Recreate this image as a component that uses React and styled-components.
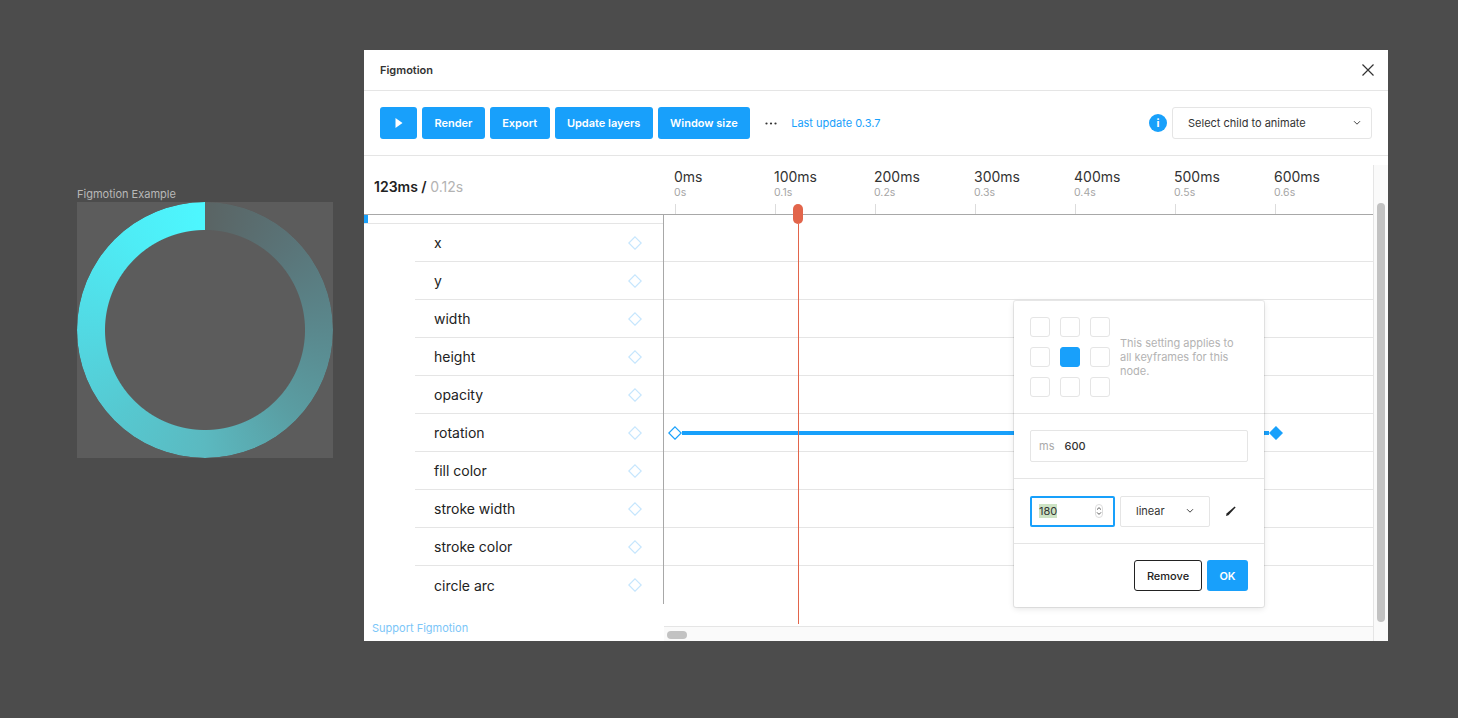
import styled, { createGlobalStyle } from 'styled-components';

const BLUE = '#18a0fb';
const LINE = '#e5e5e5';

const GlobalStyle = createGlobalStyle`
  html, body { margin: 0; padding: 0; height: 100%; background: #4c4c4c; overflow: hidden; }
  body { font-family: Inter, "Liberation Sans", sans-serif; color: #222; }
  * { box-sizing: border-box; }
`;

const PROPS = ['x', 'y', 'width', 'height', 'opacity', 'rotation', 'fill color', 'stroke width', 'stroke color', 'circle arc'];
const TICKS = [0, 100, 200, 300, 400, 500, 600];

function Diamond({ fill = 'none', stroke = BLUE, size = 14 }) {
  return (
    <svg width={size} height={size} viewBox="0 0 14 14" style={{ flex: 'none', display: 'block' }}>
      <path d="M7 0.8 L13.2 7 L7 13.2 L0.8 7 Z" fill={fill} stroke={stroke} strokeWidth="1.2" />
    </svg>
  );
}

function Chevron({ color = '#444' }) {
  return (
    <svg width="8" height="6" viewBox="0 0 8 6">
      <path d="M1 1.2 L4 4.2 L7 1.2" fill="none" stroke={color} strokeWidth="1" />
    </svg>
  );
}

export default function App() {
  return (
    <Page>
      <GlobalStyle />
      <Canvas>
        <FrameLabel>Figmotion Example</FrameLabel>
        <Frame>
          <Ring />
        </Frame>
      </Canvas>

      <Window>
        <TitleBar>
          <Title>Figmotion</Title>
          <svg width="14" height="14" viewBox="0 0 14 14">
            <path d="M1.5 1.5 L12.5 12.5 M12.5 1.5 L1.5 12.5" stroke="#333" strokeWidth="1.2" fill="none" />
          </svg>
        </TitleBar>

        <Toolbar>
          <Button $icon>
            <svg width="8" height="10" viewBox="0 0 8 10">
              <path d="M0.5 0 L7.5 5 L0.5 10 Z" fill="#fff" />
            </svg>
          </Button>
          <Button>Render</Button>
          <Button>Export</Button>
          <Button>Update layers</Button>
          <Button>Window size</Button>
          <Dots>
            <svg width="12" height="3" viewBox="0 0 12 3">
              <circle cx="1.5" cy="1.5" r="1.1" fill="#333" />
              <circle cx="6" cy="1.5" r="1.1" fill="#333" />
              <circle cx="10.5" cy="1.5" r="1.1" fill="#333" />
            </svg>
          </Dots>
          <UpdateLink>Last update 0.3.7</UpdateLink>
          <ToolbarRight>
            <InfoBadge>i</InfoBadge>
            <ChildSelect>
              Select child to animate
              <Chevron />
            </ChildSelect>
          </ToolbarRight>
        </Toolbar>

        <Timeline>
          <Main>
            <Header>
              <TimeReadout>
                123ms / <Muted>0.12s</Muted>
              </TimeReadout>
              <Ruler>
                {TICKS.map(t => (
                  <Tick key={t}>
                    <TickMs>{t}ms</TickMs>
                    <TickSec>{t / 1000}s</TickSec>
                    <TickMark />
                  </Tick>
                ))}
              </Ruler>
            </Header>

            <Body>
              <LeftColumn>
                <PropList>
                  <TopRow>
                    <BlueChip />
                  </TopRow>
                  {PROPS.map((p, i) => (
                    <PropRow key={p} $last={i === PROPS.length - 1}>
                      {p}
                      <Diamond stroke="#c6e6fd" />
                    </PropRow>
                  ))}
                </PropList>
                <Support>Support Figmotion</Support>
              </LeftColumn>

              <RightColumn>
                <Tracks>
                  {PROPS.map((p, i) => (
                    <Track key={p} $first={i === 0} $last={i === PROPS.length - 1}>
                      {p === 'rotation' && (
                        <>
                          <Diamond fill="#fff" />
                          <KeyBar />
                          <Diamond fill={BLUE} />
                        </>
                      )}
                    </Track>
                  ))}
                </Tracks>
                <HScroll>
                  <HThumb />
                </HScroll>
              </RightColumn>
            </Body>
          </Main>

          <VScroll>
            <VThumb />
          </VScroll>

          <Playhead>
            <PlayKnob />
            <PlayLine />
          </Playhead>

          <Popover>
            <AnchorSection>
              <AnchorGrid>
                {[0, 1, 2, 3, 4, 5, 6, 7, 8].map(n => (
                  <AnchorCell key={n} $active={n === 4} />
                ))}
              </AnchorGrid>
              <AnchorNote>This setting applies to all keyframes for this node.</AnchorNote>
            </AnchorSection>

            <MsSection>
              <MsField>
                <MsUnit>ms</MsUnit>
                600
              </MsField>
            </MsSection>

            <ValueSection>
              <ValueField>
                <Selected>180</Selected>
                <Spinner>
                  <svg width="6" height="10" viewBox="0 0 6 10">
                    <path d="M1 3.6 L3 1.6 L5 3.6 M1 6.4 L3 8.4 L5 6.4" fill="none" stroke="#444" strokeWidth="0.9" />
                  </svg>
                </Spinner>
              </ValueField>
              <EaseSelect>
                linear
                <Chevron />
              </EaseSelect>
              <PenButton>
                <svg width="12" height="12" viewBox="0 0 12 12">
                  <path d="M1 11 L1.6 8.6 L9.6 1.6 L10.6 2.4 L3.4 10.2 Z" fill="#222" />
                </svg>
              </PenButton>
            </ValueSection>

            <ActionSection>
              <RemoveButton>Remove</RemoveButton>
              <OkButton>OK</OkButton>
            </ActionSection>
          </Popover>
        </Timeline>
      </Window>
    </Page>
  );
}

const Page = styled.div`
  display: flex;
  align-items: flex-start;
  width: 1458px;
  height: 718px;
  padding: 50px 0 0 77px;
`;

const Canvas = styled.div`
  width: 256px;
  margin: 137px 31px 0 0;
`;

const FrameLabel = styled.div`
  height: 15px;
  font-size: 11px;
  line-height: 15px;
  color: #b8b8b8;
`;

const Frame = styled.div`
  width: 256px;
  height: 256px;
  background: #5c5c5c;
`;

const Ring = styled.div`
  width: 256px;
  height: 256px;
  border-radius: 50%;
  background: conic-gradient(#5a6464 0deg, #5a7478 45deg, #5a888d 90deg, #5a9ea3 135deg, #5bb9c0 180deg, #56c8d0 225deg, #52d9e3 270deg, #4eecf5 320deg, #4df7ff 360deg);
  -webkit-mask: radial-gradient(circle closest-side, transparent 99.5px, #000 100.5px);
  mask: radial-gradient(circle closest-side, transparent 99.5px, #000 100.5px);
`;

const Window = styled.div`
  display: flex;
  flex-direction: column;
  width: 1024px;
  height: 591px;
  background: #fff;
`;

const TitleBar = styled.div`
  flex: none;
  display: flex;
  align-items: center;
  justify-content: space-between;
  height: 41px;
  padding: 0 13px 1px 16px;
  border-bottom: 1px solid ${LINE};
`;

const Title = styled.div`
  font-size: 11px;
  font-weight: 600;
  color: #333;
`;

const Toolbar = styled.div`
  flex: none;
  display: flex;
  align-items: center;
  gap: 5px;
  height: 65px;
  padding: 0 16px;
  border-bottom: 1px solid ${LINE};
`;

const Button = styled.button`
  display: flex;
  align-items: center;
  justify-content: center;
  height: 32px;
  width: ${p => (p.$icon ? '37px' : 'auto')};
  padding: ${p => (p.$icon ? '0' : '0 12.4px')};
  border: none;
  border-radius: 3px;
  background: ${BLUE};
  color: #fff;
  font-family: inherit;
  font-size: 11px;
  font-weight: 600;
`;

const Dots = styled.div`
  display: flex;
  margin: 0 9px 0 10px;
`;

const UpdateLink = styled.div`
  font-size: 11px;
  color: ${BLUE};
`;

const ToolbarRight = styled.div`
  display: flex;
  align-items: center;
  gap: 5px;
  margin-left: auto;
`;

const InfoBadge = styled.div`
  display: flex;
  align-items: center;
  justify-content: center;
  width: 18px;
  height: 18px;
  border-radius: 50%;
  background: ${BLUE};
  color: #fff;
  font-size: 11px;
  font-weight: 700;
`;

const ChildSelect = styled.div`
  display: flex;
  align-items: center;
  justify-content: space-between;
  width: 200px;
  height: 32px;
  padding: 0 10px 0 15px;
  border: 1px solid ${LINE};
  border-radius: 3px;
  font-size: 11px;
  color: #333;
`;

const Timeline = styled.div`
  position: relative;
  flex: 1;
  display: flex;
  min-height: 0;
`;

const Main = styled.div`
  flex: 1;
  min-width: 0;
  display: flex;
  flex-direction: column;
`;

const Header = styled.div`
  flex: none;
  display: flex;
  height: 59px;
  border-bottom: 1px solid #a8a8a8;
`;

const TimeReadout = styled.div`
  flex: none;
  width: 300px;
  padding: 22px 0 0 10px;
  font-size: 14px;
  line-height: 17px;
  font-weight: 600;
  color: #222;
`;

const Muted = styled.span`
  font-weight: 400;
  color: #b3b3b3;
`;

const Ruler = styled.div`
  display: flex;
  padding-left: 10px;
`;

const Tick = styled.div`
  position: relative;
  width: 100px;
  padding-top: 12px;
`;

const TickMs = styled.div`
  font-size: 14px;
  line-height: 17px;
  color: #333;
`;

const TickSec = styled.div`
  margin-top: 1px;
  font-size: 10.5px;
  line-height: 13px;
  color: #a6a6a6;
`;

const TickMark = styled.div`
  position: absolute;
  left: 1px;
  bottom: 0;
  width: 1px;
  height: 10px;
  background: #dcdcdc;
`;

const Body = styled.div`
  flex: 1;
  min-height: 0;
  display: flex;
`;

const LeftColumn = styled.div`
  flex: none;
  width: 300px;
  display: flex;
  flex-direction: column;
`;

const PropList = styled.div`
  height: 389px;
  border-right: 1px solid #a8a8a8;
`;

const TopRow = styled.div`
  height: 9px;
  border-bottom: 1px solid ${LINE};
`;

const BlueChip = styled.div`
  width: 4px;
  height: 8px;
  background: ${BLUE};
`;

const PropRow = styled.div`
  display: flex;
  align-items: center;
  justify-content: space-between;
  height: 38px;
  margin-left: 51px;
  padding: 0 21px 0 19px;
  border-bottom: ${p => (p.$last ? 'none' : `1px solid ${LINE}`)};
  font-size: 14px;
  color: #222;
`;

const Support = styled.div`
  padding: 17px 0 0 8px;
  font-size: 11px;
  color: #7cc6f8;
`;

const RightColumn = styled.div`
  flex: 1;
  min-width: 0;
  display: flex;
  flex-direction: column;
`;

const Tracks = styled.div`
  flex: 1;
`;

const Track = styled.div`
  display: flex;
  align-items: center;
  height: ${p => (p.$first ? '47px' : '38px')};
  padding-left: 4px;
  border-bottom: ${p => (p.$last ? 'none' : `1px solid ${LINE}`)};
`;

const KeyBar = styled.div`
  width: 587px;
  height: 4px;
  background: ${BLUE};
`;

const HScroll = styled.div`
  flex: none;
  height: 15px;
  padding: 4px 0 0 3px;
  border-top: 1px solid ${LINE};
  background: #fafafa;
`;

const HThumb = styled.div`
  width: 20px;
  height: 8px;
  border-radius: 4px;
  background: #c2c2c2;
`;

const VScroll = styled.div`
  flex: none;
  width: 15px;
  margin-top: 9px;
  padding: 38px 3px 0 3px;
  border-left: 1px solid ${LINE};
  background: #fafafa;
`;

const VThumb = styled.div`
  width: 8px;
  height: 419px;
  border-radius: 4px;
  background: #c2c2c2;
`;

const Playhead = styled.div`
  position: absolute;
  left: 429px;
  top: 48px;
  display: flex;
  flex-direction: column;
  align-items: center;
  width: 10px;
  height: 420px;
`;

const PlayKnob = styled.div`
  flex: none;
  width: 10px;
  height: 20px;
  border-radius: 5px;
  background: #e2654b;
`;

const PlayLine = styled.div`
  flex: 1;
  width: 1px;
  background: #e2654b;
`;

const Popover = styled.div`
  position: absolute;
  left: 650px;
  top: 145px;
  width: 250px;
  height: 306px;
  background: #fff;
  border-radius: 2px;
  box-shadow: 0 0 0 1px rgba(0, 0, 0, 0.08), 0 2px 6px rgba(0, 0, 0, 0.1);
`;

const PopSection = styled.div`
  display: flex;
  align-items: center;
  padding: 0 16px;
`;

const AnchorSection = styled(PopSection)`
  height: 113px;
  gap: 10px;
  border-bottom: 1px solid ${LINE};
`;

const AnchorGrid = styled.div`
  flex: none;
  display: grid;
  grid-template-columns: repeat(3, 20px);
  grid-auto-rows: 20px;
  gap: 10px;
`;

const AnchorCell = styled.div`
  border-radius: 3px;
  background: ${p => (p.$active ? BLUE : '#fff')};
  border: 1px solid ${p => (p.$active ? BLUE : LINE)};
`;

const AnchorNote = styled.div`
  max-width: 118px;
  font-size: 11px;
  line-height: 14px;
  color: #b3b3b3;
`;

const MsSection = styled(PopSection)`
  height: 65px;
  border-bottom: 1px solid ${LINE};
`;

const MsField = styled.div`
  display: flex;
  align-items: center;
  width: 218px;
  height: 32px;
  padding: 0 8px;
  border: 1px solid ${LINE};
  border-radius: 2px;
  font-size: 11px;
  font-weight: 500;
  color: #333;
`;

const MsUnit = styled.span`
  margin-right: 10px;
  font-weight: 400;
  color: #aaa;
`;

const ValueSection = styled(PopSection)`
  height: 65px;
  border-bottom: 1px solid ${LINE};
`;

const ValueField = styled.div`
  display: flex;
  align-items: center;
  justify-content: space-between;
  width: 85px;
  height: 31px;
  padding: 0 10px 0 7px;
  border: 2px solid ${BLUE};
  border-radius: 2px;
  font-size: 11px;
  color: #333;
`;

const Selected = styled.span`
  background: #cde3c4;
`;

const Spinner = styled.span`
  display: flex;
  align-items: center;
  justify-content: center;
  width: 8px;
  height: 14px;
  border: 1px solid #ddd;
  border-radius: 4px;
`;

const EaseSelect = styled.div`
  display: flex;
  align-items: center;
  justify-content: space-between;
  width: 90px;
  height: 31px;
  margin-left: 5px;
  padding: 0 15px;
  border: 1px solid ${LINE};
  border-radius: 2px;
  font-size: 11px;
  color: #333;
`;

const PenButton = styled.div`
  display: flex;
  margin-left: 15px;
`;

const ActionSection = styled(PopSection)`
  justify-content: flex-end;
  gap: 5px;
  height: 63px;
`;

const RemoveButton = styled.button`
  width: 68px;
  height: 31px;
  border: 1px solid #222;
  border-radius: 3px;
  background: #fff;
  font-family: inherit;
  font-size: 11px;
  font-weight: 500;
  color: #222;
`;

const OkButton = styled.button`
  width: 41px;
  height: 31px;
  border: none;
  border-radius: 3px;
  background: ${BLUE};
  font-family: inherit;
  font-size: 11px;
  font-weight: 600;
  color: #fff;
`;
